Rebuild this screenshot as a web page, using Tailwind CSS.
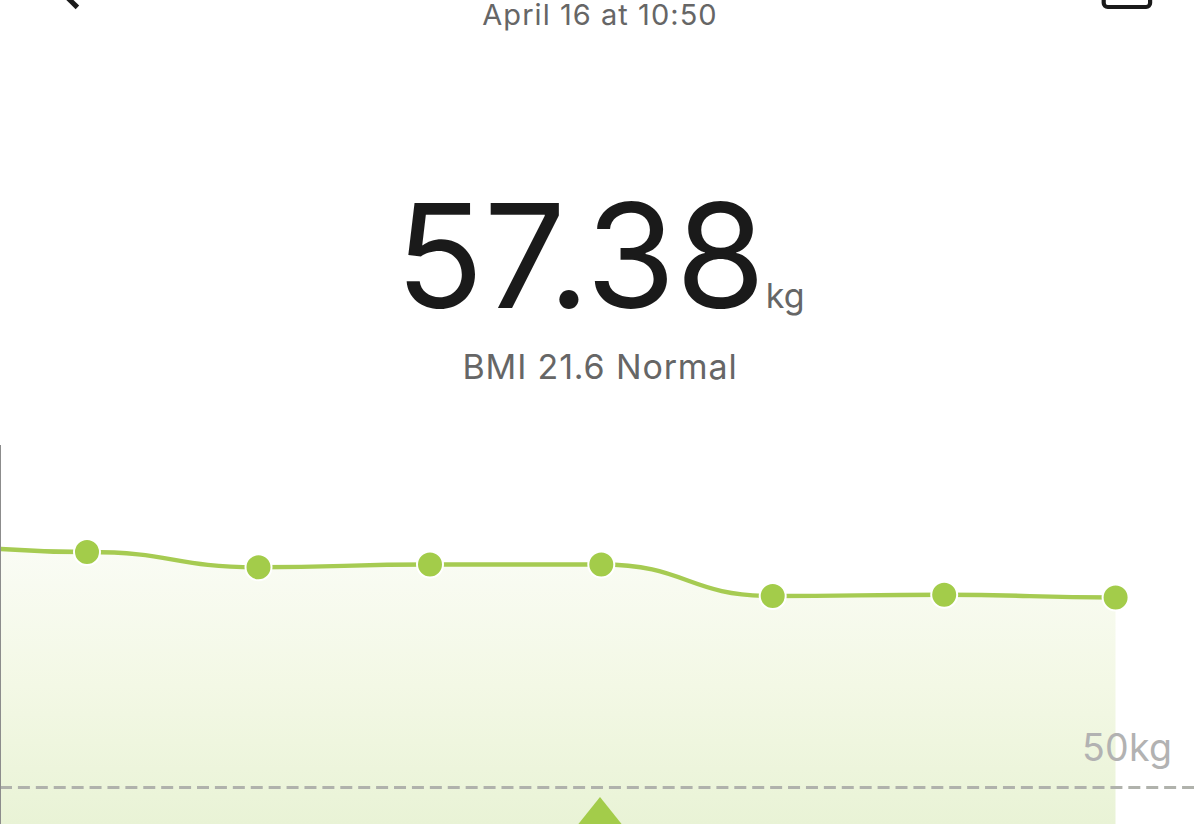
<!DOCTYPE html>
<html lang="en">
  <head>
    <meta charset="UTF-8" />
    <meta name="viewport" content="width=device-width, initial-scale=1.0" />
    <title>Weight</title>
    <script src="https://cdn.jsdelivr.net/npm/@tailwindcss/browser@4"></script>
  </head>
  <body class="bg-white font-['Inter',sans-serif] select-none">
    <div class="w-[1200px] h-[824px] overflow-hidden flex flex-col">
      <header class="h-[60px] shrink-0 flex justify-between items-start">
        <svg class="w-[200px] h-[60px]" viewBox="0 0 200 60" fill="none">
          <path d="M50.6 -19 L77.4 7.4" stroke="#1a1a1a" stroke-width="5" />
        </svg>
        <p
          class="text-[29px] leading-[30px] tracking-[1.05px] text-[#666] whitespace-nowrap"
        >
          April 16 at 10:50
        </p>
        <svg class="w-[200px] h-[60px]" viewBox="0 0 200 60" fill="none">
          <rect
            x="103.7"
            y="-40"
            width="46.4"
            height="47"
            rx="4"
            stroke="#1a1a1a"
            stroke-width="4.2"
          />
        </svg>
      </header>

      <main class="h-[385px] shrink-0 flex flex-col items-center pt-[121px]">
        <div class="flex items-baseline whitespace-nowrap">
          <span
            class="text-[145px] leading-[150px] tracking-[0.2px] text-[#1a1a1a]"
            >57.38</span
          >
          <span class="text-[34px] text-[#666]">kg</span>
        </div>
        <p
          class="mt-[15px] text-[34px] leading-[42px] tracking-[0.85px] text-[#666] whitespace-nowrap"
        >
          BMI 21.6 Normal
        </p>
      </main>

      <section class="grow">
        <svg
          class="w-[1200px] h-[379px]"
          viewBox="0 445 1200 379"
          fill="none"
        >
          <defs>
            <linearGradient
              id="area"
              gradientUnits="userSpaceOnUse"
              x1="0"
              y1="548"
              x2="0"
              y2="824"
            >
              <stop offset="0" stop-color="#fafcf5" />
              <stop offset="0.5" stop-color="#f3f8e5" />
              <stop offset="1" stop-color="#e9f3d6" />
            </linearGradient>
          </defs>
          <path
            d="M-85 546 C1 546 1 552 87 552 C173 552 173 567.3 258.5 567.3 C344 567.3 344 564.5 430 564.5 L601 564.5 C687 564.5 687 596 772.5 596 C858 596 858 594.8 944 594.8 C1030 594.8 1030 597.5 1115.5 597.5 V824 H-85 Z"
            fill="url(#area)"
          />
          <path
            d="M-85 546 C1 546 1 552 87 552 C173 552 173 567.3 258.5 567.3 C344 567.3 344 564.5 430 564.5 L601 564.5 C687 564.5 687 596 772.5 596 C858 596 858 594.8 944 594.8 C1030 594.8 1030 597.5 1115.5 597.5"
            stroke="#a6cb52"
            stroke-width="4.4"
          />
          <g fill="#a3cc4a" stroke="#fff" stroke-width="2">
            <circle cx="87" cy="552" r="13" />
            <circle cx="258.5" cy="567.3" r="13" />
            <circle cx="430" cy="564.5" r="13" />
            <circle cx="601.3" cy="564.5" r="13" />
            <circle cx="772.7" cy="596" r="13" />
            <circle cx="944.2" cy="594.8" r="13" />
            <circle cx="1115.6" cy="597.5" r="13" />
          </g>
          <text
            x="1082"
            y="760.5"
            class="text-[37.5px] tracking-[0.3px]"
            fill="#b2b2b2"
          >
            50kg
          </text>
          <path
            d="M0 787.5 H1194"
            stroke="#b0b2ac"
            stroke-width="3"
            stroke-dasharray="12 5.91"
          />
          <path d="M600 797 L624 827 H576 Z" fill="#a3cc4a" />
          <path d="M0.5 445 V824" stroke="#8c8c8c" />
        </svg>
      </section>
    </div>
  </body>
</html>
